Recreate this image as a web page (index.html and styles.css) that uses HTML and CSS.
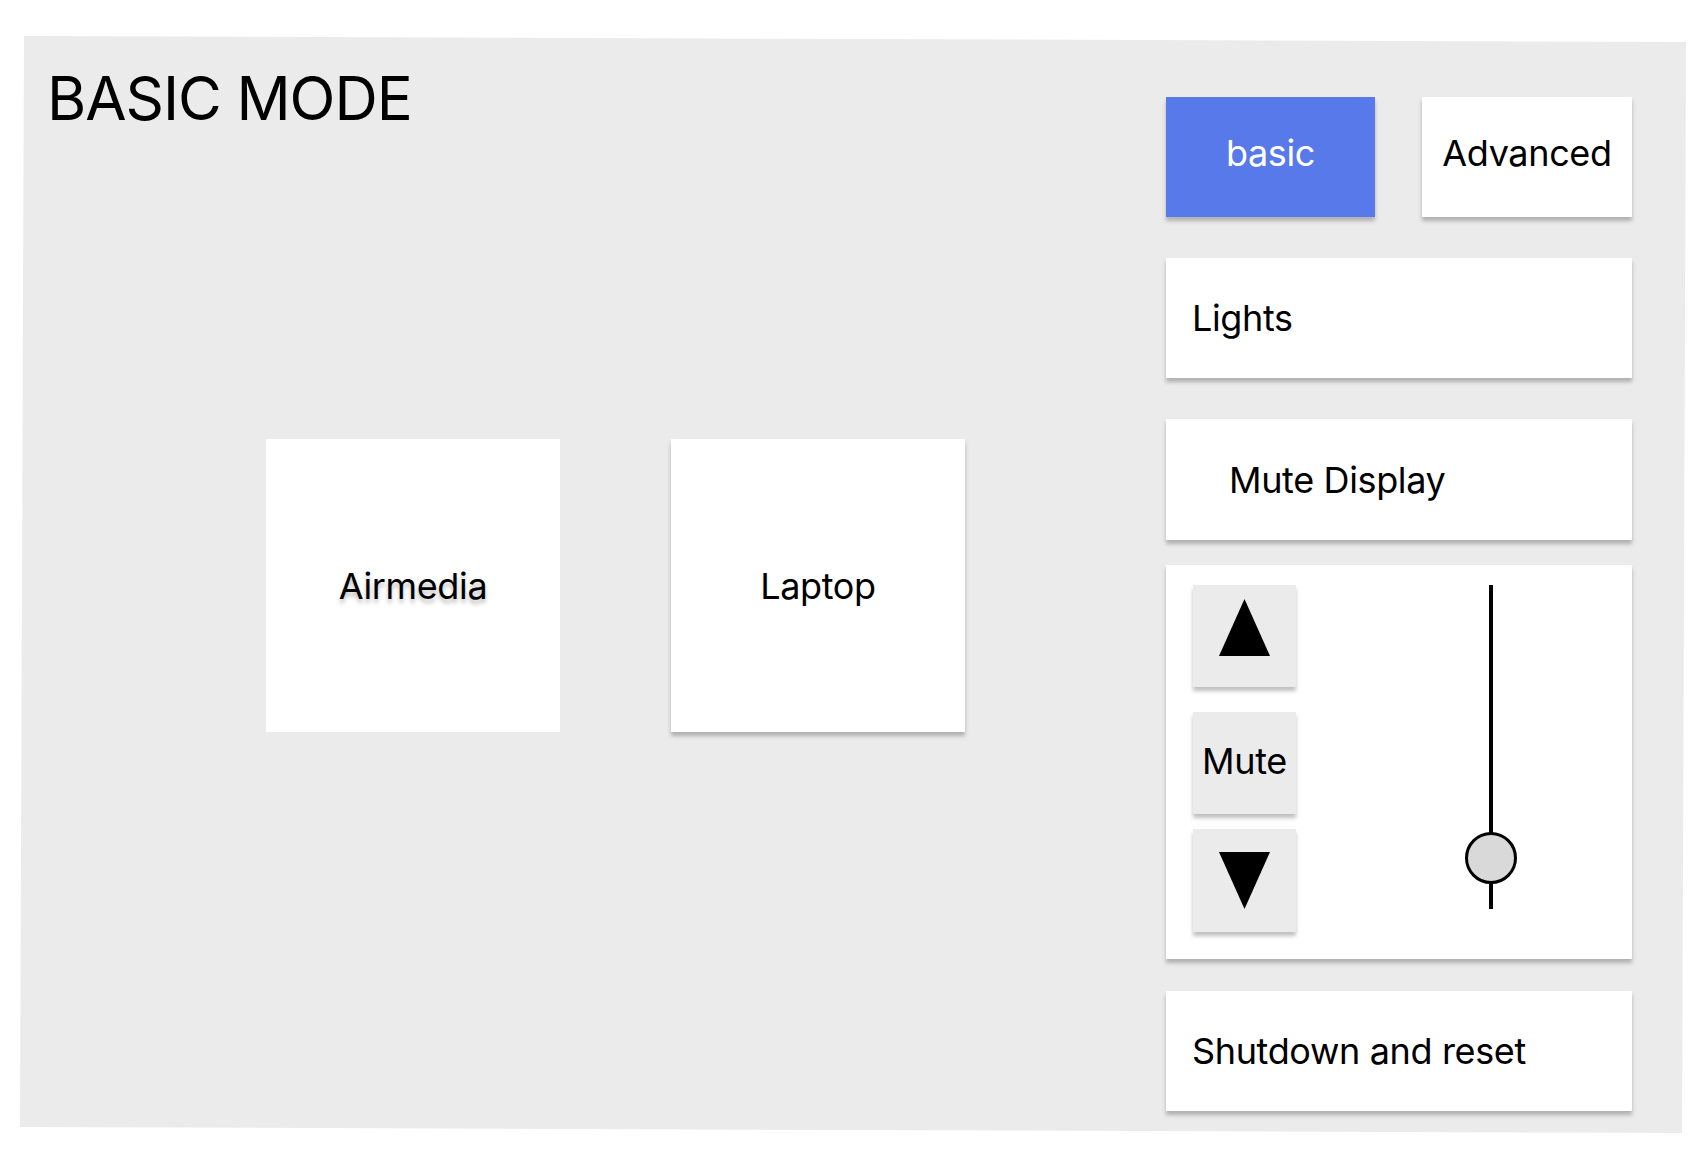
FILE: index.html
```html
<!DOCTYPE html>
<html lang="en">
<head>
<meta charset="utf-8">
<title>Basic Mode</title>
<link rel="stylesheet" href="styles.css">
</head>
<body>
<div class="panel">
  <div class="main">
    <h1 class="title">BASIC MODE</h1>
    <div class="sources">
      <div class="source source-flat"><span class="shadowed">Airmedia</span></div>
      <div class="source">Laptop</div>
    </div>
  </div>
  <div class="controls">
    <div class="mode-row">
      <div class="btn mode active">basic</div>
      <div class="btn mode">Advanced</div>
    </div>
    <div class="btn wide lights">Lights</div>
    <div class="btn wide mute-display">Mute Display</div>
    <div class="volume">
      <div class="vol-buttons">
        <div class="vol-btn up">
          <svg width="51" height="57" viewBox="0 0 51 57"><polygon points="25.5,0 51,57 0,57" fill="#000"/></svg>
        </div>
        <div class="vol-btn mute">Mute</div>
        <div class="vol-btn down">
          <svg width="51" height="57" viewBox="0 0 51 57"><polygon points="0,0 51,0 25.5,57" fill="#000"/></svg>
        </div>
      </div>
      <div class="slider">
        <div class="track"></div>
        <div class="knob"></div>
      </div>
    </div>
    <div class="btn wide shutdown">Shutdown and reset</div>
  </div>
</div>
</body>
</html>
```

FILE: styles.css
```css
* {
  box-sizing: border-box;
}

html, body {
  margin: 0;
  padding: 0;
  background: #ffffff;
}

body {
  font-family: Inter, "Noto Sans", sans-serif;
  color: #000;
  width: 1708px;
  height: 1166px;
  overflow: hidden;
}

.panel {
  margin: 36px 0 0 20px;
  width: 1666px;
  height: 1097px;
  background: #ebebeb;
  display: flex;
  clip-path: polygon(4px 0, 100% 6px, calc(100% - 4px) 100%, 0 calc(100% - 6px));
}

.main {
  width: 1146px;
  display: flex;
  flex-direction: column;
}

.title {
  margin: 32px 0 0 27px;
  font-size: 60px;
  line-height: 60px;
  font-weight: 400;
  letter-spacing: -0.018em;
}

.sources {
  margin: 311px 0 0 246px;
  display: flex;
  gap: 111px;
}

.source {
  width: 294px;
  height: 293px;
  background: #fff;
  display: flex;
  align-items: center;
  justify-content: center;
  font-size: 36px;
  letter-spacing: -0.01em;
  box-shadow: 0 4px 4px rgba(0, 0, 0, 0.25);
}

.source-flat {
  box-shadow: none;
}

.shadowed {
  text-shadow: 0 4px 4px rgba(0, 0, 0, 0.25);
}

.controls {
  margin-top: 61px;
  width: 466px;
  display: flex;
  flex-direction: column;
}

.btn {
  background: #fff;
  box-shadow: 0 4px 4px rgba(0, 0, 0, 0.25);
  font-size: 36px;
  letter-spacing: -0.01em;
  display: flex;
  align-items: center;
}

.mode-row {
  display: flex;
  gap: 47px;
}

.mode {
  width: 209px;
  height: 120px;
  justify-content: center;
  padding-bottom: 8px;
}

.mode.active {
  background: #5879e9;
  color: #fff;
}

.mode-row .mode:last-child {
  width: 210px;
}

.wide {
  height: 120px;
  padding-left: 26px;
}

.lights {
  margin-top: 41px;
}

.mute-display {
  margin-top: 41px;
  height: 121px;
  padding-left: 63px;
}

.volume {
  margin-top: 25px;
  height: 394px;
  background: #fff;
  box-shadow: 0 4px 4px rgba(0, 0, 0, 0.25);
  display: flex;
  align-items: flex-start;
}

.vol-buttons {
  margin: 20px 0 0 27px;
  display: flex;
  flex-direction: column;
}

.vol-btn {
  width: 103px;
  height: 102px;
  background: #ebebeb;
  box-shadow: 0 4px 4px rgba(0, 0, 0, 0.25);
  display: flex;
  align-items: center;
  justify-content: center;
  font-size: 36px;
  letter-spacing: -0.01em;
}

.vol-btn svg {
  display: block;
}

.vol-btn.up {
  align-items: flex-start;
  padding-top: 14px;
}

.vol-btn.mute {
  margin-top: 25px;
  padding-bottom: 4px;
}

.vol-btn.down {
  margin-top: 15px;
  height: 103px;
}

.slider {
  position: relative;
  margin: 20px 0 0 169px;
  width: 52px;
  height: 324px;
}

.track {
  margin: 0 auto;
  width: 4px;
  height: 100%;
  background: #000;
}

.knob {
  position: absolute;
  left: 0;
  top: 247px;
  width: 52px;
  height: 52px;
  border-radius: 50%;
  background: #d9d9d9;
  border: 3.5px solid #000;
}

.shutdown {
  margin-top: 32px;
}
```
